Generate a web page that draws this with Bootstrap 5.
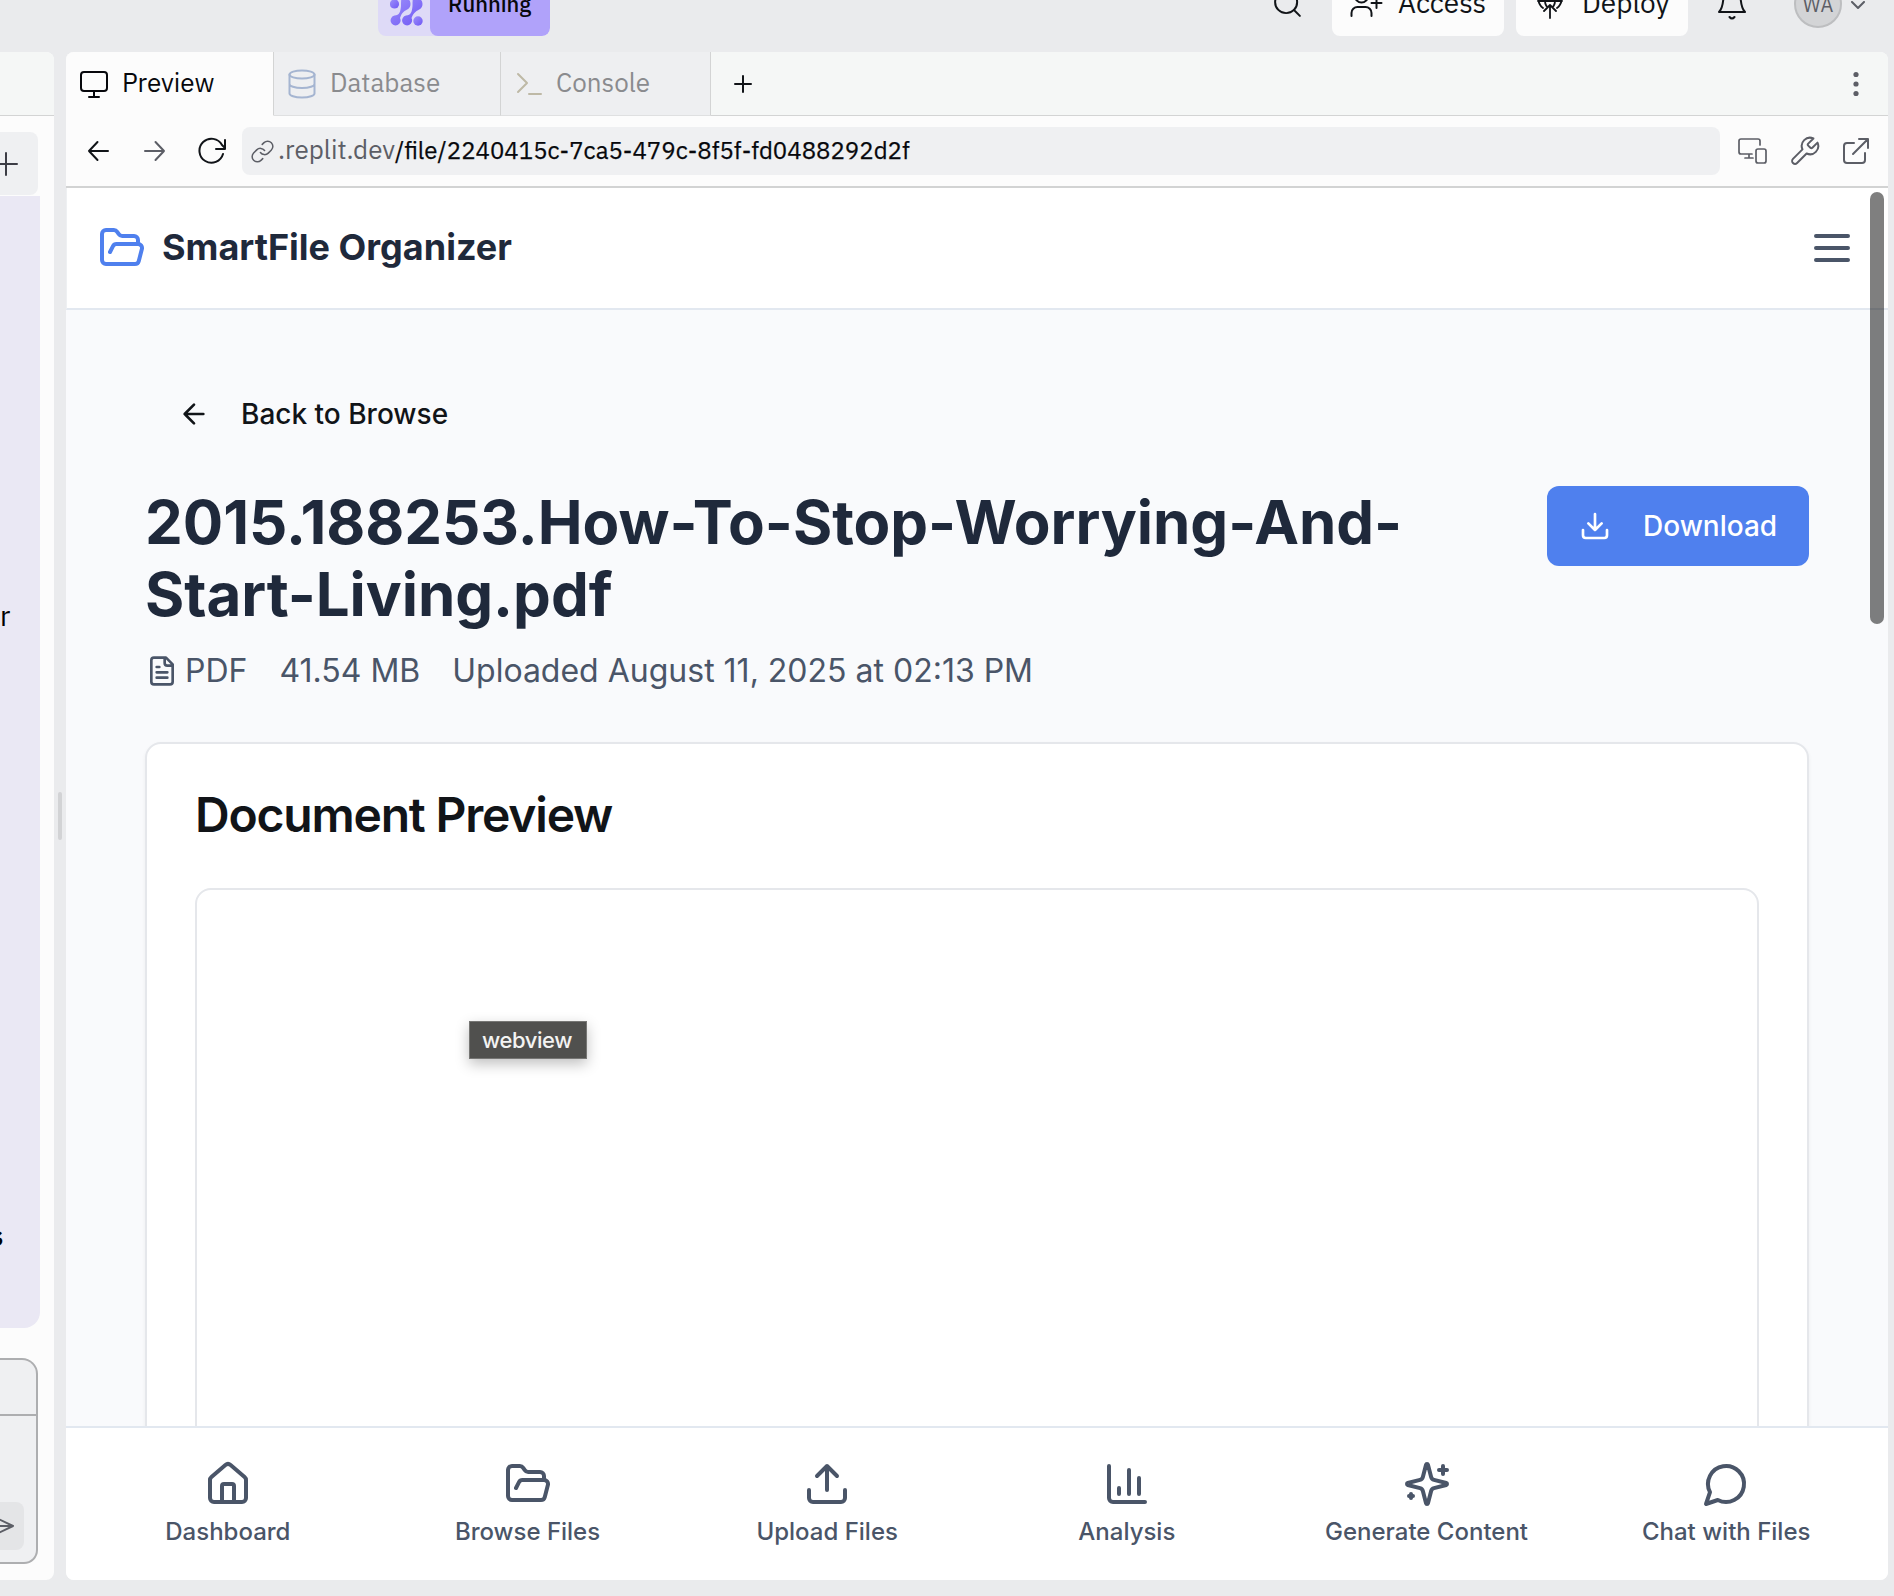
<!DOCTYPE html>
<html lang="en">
<head>
<meta charset="utf-8">
<title>SmartFile Organizer</title>
<link href="https://cdn.jsdelivr.net/npm/bootstrap@5.3.0/dist/css/bootstrap.min.css" rel="stylesheet">
<style>
html,body{height:1596px;overflow:hidden}
body{background:#eaebed;font-family:Inter,sans-serif;color:#111418}
svg{display:block;flex:none;fill:none;stroke:currentColor;stroke-width:2;stroke-linecap:round;stroke-linejoin:round}
.thin{stroke-width:1.45}
.ide{font-family:"IBM Plex Sans","Noto Sans",sans-serif}
.topbar{height:52px;padding-left:378px;padding-right:28px}
.topitem{height:66px;margin-top:-30px}
.runpill{width:172px;background:#dedaf7;border-radius:8px;overflow:hidden}
.runlogo{width:52px;padding:22px 0 0 12px}
.runlabel{width:120px;background:#b0a2fa;border-radius:8px;font-weight:500;font-size:22px;line-height:30px;padding:19px 0 0 18px;color:#07080c}
.topbtn{width:172px;background:#fcfcfc;border-radius:8px;font-size:28px;line-height:40px;padding:11px 0 0 17px}
.topbtn span{padding-top:2px}
.avatar{width:48px;height:48px;border-radius:50%;background:#d3d4d6;border:2px solid #bdbec0;color:#5c5e66;font-size:20px;line-height:46px;margin-top:-20px}
.leftpane{width:54px;height:1528px;background:#fcfcfc;border-radius:0 8px 8px 0;overflow:hidden}
.lefthead{height:64px;background:#f5f7f6;border-bottom:1px solid #d3d4d4}
.plusbox{width:38px;height:63px;margin-top:16px;background:#eff0f2;border-radius:0 8px 8px 0}
.bubble{width:40px;height:1132px;margin-top:1px;background:#eae8f4;border-radius:0 0 16px 0;font-size:28px;line-height:36px;color:#000}
.composer{width:38px;height:206px;margin-top:30px;background:#eff0f2;border:2px solid #adaeb0;border-left:0;border-radius:0 16px 14px 0;overflow:hidden}
.comptop{height:56px;border-bottom:2px solid #adaeb0}
.sendbox{width:24px;height:48px;margin-top:86px;background:#e4e5e7;border-radius:0 8px 8px 0;color:#5c5e66}
.gutter{width:12px;height:1528px;padding:740px 4px 0}
.grip{width:4px;height:48px;border-radius:2px;background:#d2d3d5}
.mainpane{width:1822px;height:1528px;background:#fcfcfc;border-radius:8px;overflow:hidden}
.tabrow{height:64px;background:#f5f7f6;font-size:26px}
.idetab{height:64px;background:#eeeff1;color:#8a8b8e;border-right:1px solid #d3d4d4;border-bottom:1px solid #dfe0e1}
.idetab span{padding-bottom:2px}
.idetab.on{background:#fcfcfc;color:#07080c;border-bottom-color:#fcfcfc}
.tabrest{border-bottom:1px solid #d3d4d4}
.toolrow{height:72px;border-bottom:2px solid #d2d3d3;padding-right:17px}
.urlbox{width:1478px;height:48px;border-radius:8px;background:#eff0f2;font-size:26px;color:#5c5e66;padding-left:8px}
.urlbox span{padding-bottom:3px}
.urlbox b{font-weight:400;font-size:24px;color:#07080c;-webkit-text-stroke:.25px #07080c}
.apphead{height:122px;background:#fff;border-bottom:2px solid #e2e8f0;padding:0 32px 0 31px;color:#1f293b;font-weight:700;font-size:36px;border-left:1px solid #eef0f2}
.appname{padding-bottom:2px}
.appbody{height:1116px;background:#f9fafc;padding:64px 79px 0 79px;overflow:hidden}
.backbtn{height:80px;padding-left:33px;font-size:28px;font-weight:500;gap:31px}
.doctitle{font-size:60px;line-height:72px;font-weight:700;letter-spacing:-.05px;color:#1f293b;width:1340px;margin:0}
.dlbtn{width:262px;height:80px;border-radius:12px;background:#4f80ee;color:#fff;font-size:28px;font-weight:500;gap:32px;padding:0 0 0 32px;border:0}
.dlbtn:hover{background:#4f80ee;color:#fff}
.metarow{gap:32px;font-size:32px;line-height:46px;padding:2px 0 0 1px;color:#4a5568;margin-top:16px}
.doccard{height:800px;margin-top:48px;border:2px solid #e5e7eb;border-radius:16px;padding:48px;background:#fff;box-shadow:0 2px 4px rgba(0,0,0,.05)}
.cardhead{font-size:48px;line-height:46px;height:48px;font-weight:600;letter-spacing:-1.2px;color:#111418;margin:0 0 48px}
.viewframe{height:700px;border:2px solid #e5e7eb;border-radius:16px}
.botnav{height:154px;background:#fff;border-top:2px solid #e2e8f0;color:#4a5568;padding:32px 12px 0;font-size:24px;font-weight:500;line-height:32px}
.navcell{gap:8px;flex:1 1 0}
.scrollthumb{position:absolute;left:1870px;top:192px;width:14px;height:432px;border-radius:7px;background:rgba(0,0,0,.5)}
.hovertip{position:absolute;left:469px;top:1021px;width:118px;height:38px;background:#50504e;border:1px solid #767674;color:#f3f3f2;font-size:22px;line-height:36px;box-shadow:0 5px 14px rgba(0,0,0,.25);letter-spacing:-.4px;font-weight:500;padding-right:2px}
</style>
<script src="https://cdn.jsdelivr.net/npm/bootstrap@5.3.0/dist/js/bootstrap.bundle.min.js"></script>
</head>
<body>
<header class="topbar ide d-flex align-items-start">
  <div class="topitem runpill d-flex">
    <div class="runlogo"><svg width="33" height="34" viewBox="0 0 33 34"><defs><linearGradient id="lg" x1="0" y1="0" x2="1" y2="1"><stop offset="0" stop-color="#9d90fa"/><stop offset="1" stop-color="#6f57f5"/></linearGradient></defs><g fill="url(#lg)" stroke="none"><circle cx="4.500" cy="12" r="4.600"/><circle cx="28" cy="29" r="4.700"/><path d="M11.500 6c6-1 9 2 9 6 0 5-4 5.500-6.500 7.500-2.500 2-3 4-4 6.500a5 5 0 1 1-5.500-2.500c5 0 6-4 6.500-9.500 0-3 0-6 .5-8zM23 6c6-1 9.500 2 9.500 6 0 5-4 5.500-6.500 7.500-2.500 2-3.500 4-4.500 6.500a5 5 0 1 1-5.500-2.500c5 0 6-4 6.500-9.500 0-3 0-6 .5-8z"/></g></svg></div>
    <div class="runlabel">Running</div>
  </div>
  <svg class="thin" style="margin-left:721px;margin-top:-13px" width="33" height="33" viewBox="0 0 24 24"><circle cx="11" cy="11" r="8"/><path d="m21 21-4.300-4.300"/></svg>
  <div class="topitem topbtn d-flex ms-auto"><svg width="34" height="38" viewBox="0 0 34 38"><path d="M2.500 35v-3a6 6 0 0 1 6-6h8a6 6 0 0 1 6 6v3M27.500 17v10M22.500 22h10"/><circle cx="12.500" cy="15" r="6.500"/></svg><span style="margin-left:15px">Access</span></div>
  <div class="topitem topbtn d-flex" style="margin-left:12px"><svg width="34" height="40" viewBox="0 0 34 40"><path d="M5 17c.5 5 2 8 5 10M29 17c-.5 5-2 8-5 10M5 20h24M12 20c0 3 1 4 1.500 5M22 20c0 3-1 4-1.500 5M17 37V24M11 30l6-6 6 6" style="stroke-width:1.800"/></svg><span style="margin-left:15px">Deploy</span></div>
  <svg style="margin-left:28px;margin-top:-14px" width="32" height="34" viewBox="0 0 32 34"><path d="M3 26c3-3 4-7 4.500-15h17c.5 8 1.500 12 4.500 15zM13.500 31q2.500 3 5 0"/></svg>
  <div class="avatar text-center" style="margin-left:46px">WA</div>
  <svg style="margin-left:8px;margin-top:1px;color:#5c5e66" width="16" height="10" viewBox="0 0 16 10"><path d="m2 1 6 6 6-6"/></svg>
</header>
<div class="d-flex">
  <aside class="leftpane ide">
    <div class="lefthead"></div>
    <div class="plusbox pt-3"><svg width="20" height="32" viewBox="0 0 20 32" style="color:#3c3d45"><path d="M-5 16H17M6 5v22"/></svg></div>
    <div class="bubble"><div style="padding-top:402px;height:438px">r</div><div class="fw-bold" style="margin-top:584px;margin-left:-11px">s</div></div>
    <div class="composer"><div class="comptop"></div><div class="sendbox"><svg width="20" height="48" viewBox="0 0 20 48"><path d="M-12 12 13 24-12 36M-10 24h23"/></svg></div></div>
  </aside>
  <div class="gutter"><div class="grip"></div></div>
  <main class="mainpane">
    <nav class="tabrow ide d-flex">
      <div class="idetab on d-flex align-items-center" style="width:208px;padding-left:13px"><svg width="30" height="28" viewBox="0 0 30 28"><rect x="2" y="2" width="26" height="19" rx="3"/><path d="M15 21v6M10 27h10"/></svg><span style="margin-left:13px">Preview</span></div>
      <div class="idetab d-flex align-items-center" style="width:227px;padding-left:14px"><svg width="28" height="30" viewBox="0 0 28 30" style="color:#a5b5d1"><ellipse cx="14" cy="5.500" rx="12.500" ry="4"/><path d="M1.500 5.500v19c0 2 5 4 12.500 4s12.500-2 12.500-4v-19M1.500 15c0 2 5 4 12.500 4s12.500-2 12.500-4"/></svg><span style="margin-left:14px">Database</span></div>
      <div class="idetab d-flex align-items-center" style="width:210px;padding-left:14px"><svg width="28" height="26" viewBox="0 0 28 26" style="color:#beb9a6"><path d="m3 3 9 9-9 9M14 23h12"/></svg><span style="margin-left:13px">Console</span></div>
      <div class="tabrest d-flex align-items-center flex-fill"><svg style="margin-left:23px" width="18" height="18" viewBox="0 0 18 18"><path d="M1 9h16M9 1v16"/></svg>
      <svg class="ms-auto" style="margin-right:29px;color:#5c5e66" width="6" height="26" viewBox="0 0 6 26"><g fill="currentColor" stroke="none"><circle cx="3" cy="3.500" r="2.600"/><circle cx="3" cy="13" r="2.600"/><circle cx="3" cy="22.500" r="2.600"/></g></svg></div>
    </nav>
    <div class="toolrow ide d-flex align-items-center">
      <svg style="margin-left:21px" width="22" height="22" viewBox="0 0 22 22"><path d="M21 11H2M10.500 2 2 11l8.500 9"/></svg>
      <svg style="margin-left:35px;color:#5c5e66" width="22" height="22" viewBox="0 0 22 22"><path d="M1 11h19M11.500 2l8.500 9-8.500 9"/></svg>
      <svg style="margin-left:31px" width="30" height="28" viewBox="0 0 30 28"><path d="M26 17A12 12 0 1 1 25 8l3 3M28 3v9h-9"/></svg>
      <div class="urlbox d-flex align-items-center" style="margin-left:15px"><svg class="thin" width="25" height="25" viewBox="0 0 24 24"><path d="M10 13a5 5 0 0 0 7.540.540l3-3a5 5 0 0 0-7.070-7.070l-1.720 1.710M14 11a5 5 0 0 0-7.540-.540l-3 3a5 5 0 0 0 7.070 7.070l1.710-1.710"/></svg><span style="margin-left:3px">.replit.dev<b>/file/2240415c-7ca5-479c-8f5f-fd0488292d2f</b></span></div>
      <svg style="margin-left:17px;color:#5c5e66;stroke-width:1.7" width="30" height="28" viewBox="0 0 30 28"><path d="M23 8V4q0-2-2-2H4Q2 2 2 4v11q0 2 2 2h11M12 17v4M8 21h8"/><rect x="19" y="12" width="10" height="14" rx="2"/></svg>
      <svg class="thin" style="margin-left:21px;color:#5c5e66" width="33" height="33" viewBox="0 0 24 24"><path d="M14.700 6.300a1 1 0 0 0 0 1.400l1.600 1.600a1 1 0 0 0 1.400 0l3.770-3.770a6 6 0 0 1-7.940 7.940l-6.910 6.910a2.120 2.120 0 0 1-3-3l6.910-6.910a6 6 0 0 1 7.940-7.940l-3.760 3.760z"/></svg>
      <svg style="margin-left:21px;color:#5c5e66" width="28" height="28" viewBox="0 0 28 28"><path d="M12 6H5Q2 6 2 9v14q0 3 3 3h15q3 0 3-3v-7M17 2h9v9M26 2 11 17"/></svg>
    </div>
    <div class="apphead d-flex align-items-center justify-content-between">
      <div class="d-flex align-items-center gap-3"><svg width="48" height="48" viewBox="0 0 24 24" style="color:#4f80ee"><path d="m6 14 1.500-2.900A2 2 0 0 1 9.240 10H20a2 2 0 0 1 1.940 2.500l-1.540 6a2 2 0 0 1-1.950 1.500H4a2 2 0 0 1-2-2V5a2 2 0 0 1 2-2h3.900a2 2 0 0 1 1.690.900l.810 1.200a2 2 0 0 0 1.670.900H18a2 2 0 0 1 2 2v2"/></svg><span class="appname">SmartFile Organizer</span></div>
      <svg width="48" height="48" viewBox="0 0 24 24" style="color:#4a5568"><path d="M4 6h16M4 12h16M4 18h16"/></svg>
    </div>
    <section class="appbody">
      <div class="backbtn d-flex align-items-center"><svg width="32" height="32" viewBox="0 0 24 24"><path d="m12 19-7-7 7-7M19 12H5"/></svg>Back to Browse</div>
      <div class="d-flex justify-content-between align-items-start" style="margin-top:32px">
        <h1 class="doctitle">2015.188253.How-To-Stop-Worrying-And-<br>Start-Living.pdf</h1>
        <button class="btn dlbtn d-flex align-items-center"><svg width="32" height="32" viewBox="0 0 24 24"><path d="M21 15v4a2 2 0 0 1-2 2H5a2 2 0 0 1-2-2v-4M7 10l5 5 5-5M12 15V3"/></svg>Download</button>
      </div>
      <div class="metarow d-flex align-items-center"><span class="d-flex align-items-center" style="gap:7px"><svg width="32" height="32" viewBox="0 0 24 24"><path d="M15 2H6a2 2 0 0 0-2 2v16a2 2 0 0 0 2 2h12a2 2 0 0 0 2-2V7zM14 2v4a2 2 0 0 0 2 2h4M10 9H8M16 13H8M16 17H8"/></svg>PDF</span><span>41.54 MB</span><span>Uploaded August 11, 2025 at 02:13 PM</span></div>
      <div class="doccard"><h2 class="cardhead">Document Preview</h2><div class="viewframe"></div></div>
    </section>
    <nav class="botnav d-flex text-center">
      <div class="navcell d-flex flex-column align-items-center"><svg width="48" height="48" viewBox="0 0 24 24"><path d="M15 21v-8a1 1 0 0 0-1-1h-4a1 1 0 0 0-1 1v8"/><path d="M3 10a2 2 0 0 1 .709-1.528l7-5.999a2 2 0 0 1 2.582 0l7 5.999A2 2 0 0 1 21 10v9a2 2 0 0 1-2 2H5a2 2 0 0 1-2-2z"/></svg>Dashboard</div>
      <div class="navcell d-flex flex-column align-items-center"><svg width="48" height="48" viewBox="0 0 24 24"><path d="m6 14 1.500-2.900A2 2 0 0 1 9.240 10H20a2 2 0 0 1 1.940 2.500l-1.540 6a2 2 0 0 1-1.950 1.500H4a2 2 0 0 1-2-2V5a2 2 0 0 1 2-2h3.900a2 2 0 0 1 1.690.900l.810 1.200a2 2 0 0 0 1.670.900H18a2 2 0 0 1 2 2v2"/></svg>Browse Files</div>
      <div class="navcell d-flex flex-column align-items-center"><svg width="48" height="48" viewBox="0 0 24 24"><path d="M21 15v4a2 2 0 0 1-2 2H5a2 2 0 0 1-2-2v-4M17 8l-5-5-5 5M12 3v12"/></svg>Upload Files</div>
      <div class="navcell d-flex flex-column align-items-center"><svg width="48" height="48" viewBox="0 0 24 24"><path d="M3 3v16a2 2 0 0 0 2 2h16M18 17V9M13 17V5M8 17v-3"/></svg>Analysis</div>
      <div class="navcell d-flex flex-column align-items-center"><svg width="48" height="48" viewBox="0 0 24 24"><path d="M9.937 15.500A2 2 0 0 0 8.500 14.063l-6.135-1.582a.500.500 0 0 1 0-.962L8.500 9.936A2 2 0 0 0 9.937 8.500l1.582-6.135a.500.500 0 0 1 .963 0L14.063 8.500A2 2 0 0 0 15.500 9.937l6.135 1.581a.500.500 0 0 1 0 .964L15.500 14.063a2 2 0 0 0-1.437 1.437l-1.582 6.135a.500.500 0 0 1-.963 0zM20 3v4M22 5h-4M4 17v2M5 18H3"/></svg>Generate Content</div>
      <div class="navcell d-flex flex-column align-items-center"><svg width="48" height="48" viewBox="0 0 24 24"><path d="M7.900 20A9 9 0 1 0 4 16.100L2 22Z"/></svg>Chat with Files</div>
    </nav>
  </main>
</div>
<div class="scrollthumb"></div>
<div class="hovertip text-center">webview</div>
</body>
</html>
